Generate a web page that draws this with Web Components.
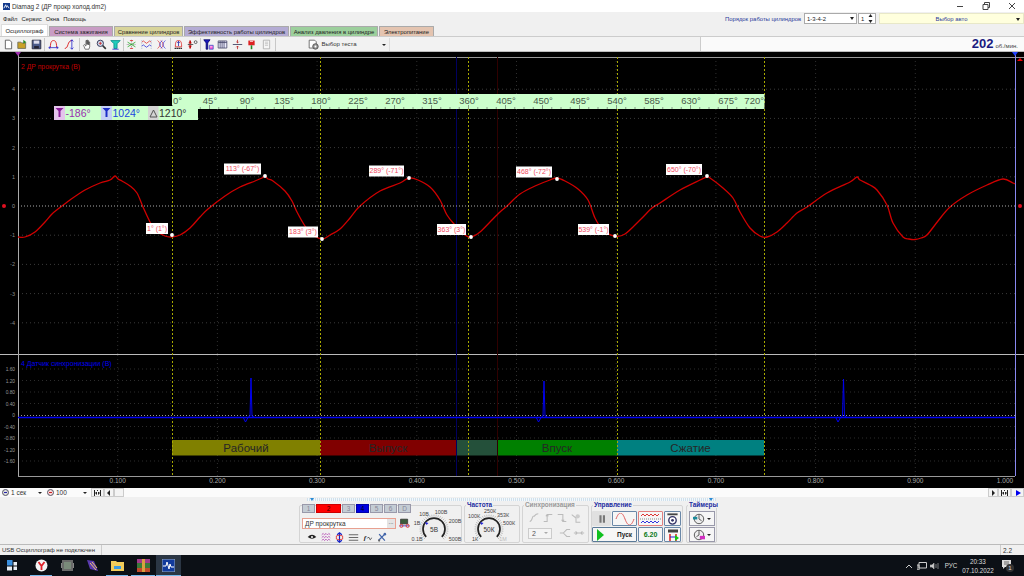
<!DOCTYPE html>
<html><head><meta charset="utf-8"><title>Diamag 2</title>
<style>html,body{margin:0;padding:0;width:1024px;height:576px;overflow:hidden;background:#f0f0f0;font-family:"Liberation Sans",Arial,sans-serif}</style>
</head><body>
<app-window>
  <title-bar></title-bar>
  <menu-bar></menu-bar>
  <tab-strip></tab-strip>
  <tool-bar></tool-bar>
  <scope-view></scope-view>
  <time-bar></time-bar>
  <control-panel></control-panel>
  <status-bar></status-bar>
  <task-bar></task-bar>
</app-window>
<script>
const I={
 doc:'<path d="M3 1.500h5.500l2.500 2.500v8.500H3z" fill="#fff" stroke="#444"/>',
 open:'<path d="M1 12V4h4l1 1h5v7z" fill="#c9a227" stroke="#665"/><path d="M8 1l4 3-4 2z" fill="#2a8a2a"/>',
 save:'<path d="M1.500 1.500h11v11h-11z" fill="#4a5a8a" stroke="#223"/><path d="M3.500 2h7v4h-7z" fill="#dde"/><path d="M4 9h6v3H4z" fill="#223"/>',
 arc:'<path d="M3 11C3 3 5 2 7 2s4 1 4 9" fill="none" stroke="#d22" stroke-width="1.200"/><path d="M1 11h12M1 11l2-1.500M1 11l2 1.500M13 11l-2-1.500M13 11l-2 1.500" stroke="#22c" fill="none"/>',
 arc2:'<path d="M1 12c5 0 3-10 9-10" fill="none" stroke="#d22" stroke-width="1.200"/><path d="M10 1v12M10 1l-2 2M10 1l2 2M10 13l-2-2M10 13l2-2" stroke="#22c" fill="none"/>',
 hand:'<path d="M4 13L2 8l1-1 2 2V2h1.200v5V1.500h1.200V7V2.300h1.200V7.500V4h1.200v6l-1 3z" fill="#fff" stroke="#333" stroke-width=".8"/>',
 zoom:'<circle cx="5.500" cy="5.500" r="4" fill="#cde" stroke="#335" stroke-width="1.200"/><path d="M8.500 8.500l4 4" stroke="#333" stroke-width="2"/><path d="M3.500 5.500h4M5.500 3.500v4" stroke="#c22"/>',
 teal:'<path d="M1 2h12L9 6v6H5V6z" fill="#2cb" stroke="#088"/><path d="M3 13h8" stroke="#22c"/>',
 cross:'<path d="M7 1v12M1 7h12" stroke="#777" stroke-dasharray="1 1"/><path d="M2 4l5 3 5-3M2 10l5-3 5 3" stroke="#2a2" fill="none"/><path d="M5 2h4M5 12h4" stroke="#d22"/>',
 w1:'<path d="M1 4q2-3 4 0t4 0 4 0" stroke="#d33" fill="none"/><path d="M1 9q2-3 4 0t4 0 4 0" stroke="#33d" fill="none"/><path d="M1 1.500v11M13 1.500v11" stroke="#9ac" stroke-dasharray="1 1"/>',
 w2:'<path d="M2 2c4 3 4 7 0 10M6 2c4 3 4 7 0 10" stroke="#d33" fill="none"/><path d="M12 2C8 5 8 9 12 12M8 2c-4 3-4 7 0 10" stroke="#33d" fill="none"/>',
 bell:'<path d="M3 10c0-8 2-8 4-8s4 0 4 8z" fill="none" stroke="#d22"/><path d="M7 3v6M5.500 5L7 3l1.500 2" stroke="#22a" fill="none"/><path d="M2 12h10" stroke="#333" stroke-width="1.500" stroke-dasharray="2 .5"/>',
 zero:'<path d="M1 7h7" stroke="#333"/><path d="M4 2v4M4 8v4" stroke="#b00" stroke-width="2"/><path d="M2 5h4M2 9h4" stroke="#b00"/><circle cx="11" cy="4" r="1.800" fill="none" stroke="#444"/>',
 fil:'<path d="M1 1h8L6 5v8H4V5z" fill="#1a1ac0" stroke="#006"/><path d="M8 8h5v5H8z" fill="#f4c" stroke="#36c"/><path d="M9 10h3" stroke="#fff"/>',
 table:'<path d="M1.500 2.500h11v9h-11z" fill="#eef" stroke="#446"/><path d="M1.500 4.500h11M4 2.500v9M6.500 2.500v9M9 2.500v9" stroke="#446"/>',
 div:'<path d="M1 7h12" stroke="#335"/><path d="M7 1v4M5.500 3.500L7 5l1.500-1.500M7 13V9M5.500 10.500L7 9l1.500 1.500" stroke="#b22" fill="none"/>',
 flag:'<path d="M3 2h8v6H3z" fill="#d22"/><path d="M7 8v5" stroke="#282" stroke-width="2"/><path d="M5 3h4" stroke="#fff"/>',
 page:'<path d="M3 1.500h8v11H3z" fill="#f6f6f6" stroke="#aaa"/><path d="M5 4h4M5 6h4M5 8h4" stroke="#bbb"/>',
 test:'<path d="M1.500 1.500h7l2 2v8h-9z" fill="#fff" stroke="#555"/><circle cx="9.500" cy="9.500" r="3.500" fill="#999" stroke="#444"/><circle cx="9.500" cy="9.500" r="1.200" fill="#fff"/>',
 eye:'<path d="M1 7q6-6 12 0q-6 5-12 0z" fill="#222"/><circle cx="7" cy="7" r="1.500" fill="#eee"/>',
 wav:'<path d="M1 4l2-2 2 2 2-2 2 2 2-2 2 2M1 8l2-2 2 2 2-2 2 2 2-2 2 2M1 12l2-2 2 2 2-2 2 2 2-2 2 2" fill="none" stroke="#a3a"/>',
 upd:'<path d="M7 1v12M4 3.500L7 1l3 2.500M4 10.500L7 13l3-2.500" fill="none" stroke="#12c" stroke-width="1.500"/><path d="M3 5q4-2 8 0v4q-4 2-8 0z" fill="none" stroke="#d22"/>',
 lines:'<path d="M1 3.500h12M1 7h12M1 10.500h12" stroke="#444"/>',
 fx:'<text x="1" y="11" font-size="10" font-style="italic" font-weight="700" font-family="Liberation Serif" fill="#222">f</text><path d="M6 9q2-4 3 0t3-1" stroke="#222" fill="none"/>',
 tool:'<path d="M2 12L11 3M3 3l8 9" stroke="#46a" stroke-width="1.800"/><circle cx="11" cy="3" r="1.800" fill="#46a"/><circle cx="3" cy="12" r="1.500" fill="#666"/>',
 scope:'<path d="M2 1.500h9v6H2z" fill="#3a5a3a" stroke="#333"/><path d="M1 10h12" stroke="#22c"/><circle cx="3" cy="10" r="2" fill="none" stroke="#d22"/><circle cx="11" cy="10" r="2" fill="none" stroke="#d22"/>',
 s1:'<path d="M2 11c3 0 3-6 4-6h1c1 0 1-3 5-3" fill="none" stroke="#bbb" stroke-width="1.200"/>',
 s2:'<path d="M2 11h4V3h6M6 3L4.500 5M6 3l1.500 2" fill="none" stroke="#bbb" stroke-width="1.200"/>',
 s3:'<path d="M2 3h6v8h4M8 11l-1.500-2M8 11l1.500-2" fill="none" stroke="#bbb" stroke-width="1.200"/>',
 s4:'<path d="M2 3l5 4v5h5" fill="none" stroke="#bbb" stroke-width="1.200"/><circle cx="9" cy="5" r="2.500" fill="#ccc"/>',
 s5:'<path d="M1 7h4l4-4h4M5 7l4 4h4" fill="none" stroke="#bbb" stroke-width="1.200"/>',
 s6:'<path d="M1 7h12M3 5l2 2-2 2M11 5L9 7l2 2" fill="none" stroke="#bbb" stroke-width="1.200"/>',
 pause:'<path d="M4 2.500h2.500v9H4zM8 2.500h2.500v9H8z" fill="#777"/>',
 gear:'<circle cx="7" cy="9" r="4" fill="#fff" stroke="#336" stroke-width="1.500"/><circle cx="7" cy="9" r="1.500" fill="#336"/><path d="M1.500 1.500h11v2h-11z" fill="#444"/>',
 auto:'<path d="M2 1.500h10v3H2z" fill="#444"/><path d="M4 6v7M10 6v7" stroke="#d22" stroke-width="1.500"/><path d="M4 9h6" stroke="#22c"/><path d="M9 7l4 3-4 3z" fill="#1c1"/>',
 t1:'<circle cx="7" cy="7" r="5.500" fill="#eee" stroke="#444"/><path d="M7 7V2.500M7 7l3 2" stroke="#444"/><path d="M0 4.500h5v3H0z" fill="#1a8a9a"/>',
 t2:'<circle cx="7" cy="7" r="5.500" fill="#eee" stroke="#444"/><path d="M7 7V2.500M7 7l-3 2" stroke="#444"/><path d="M8 8h6v4H8z" fill="#d030c0"/>'
};
const ic=(n,s=13)=>`<svg width="${s}" height="${s}" viewBox="0 0 14 14" style="display:block;flex:none">${I[n]}</svg>`;
class Base extends HTMLElement{
  constructor(){super();this.attachShadow({mode:'open'}).innerHTML=`<style>:host{display:block;box-sizing:border-box;font:6px "Liberation Sans",Arial,sans-serif;color:#222}*{box-sizing:border-box}${this.css||''}</style>${this.html||''}`;}
}
customElements.define('app-window',class extends Base{
  get css(){return ':host{display:flex;flex-direction:column;width:1024px;height:576px}'}
  get html(){return '<slot></slot>'}
});
customElements.define('title-bar',class extends Base{
  get css(){return `:host{height:12px;background:#fff;display:flex;align-items:center;padding-left:3px;gap:2px;font-size:6.400px;color:#333}
  .sp{flex:1}.w{width:24px;display:flex;justify-content:center}`}
  get html(){return `<svg width="7" height="7" viewBox="0 0 8 8"><path d="M0 0h8v8H0z" fill="#123a8c"/><path d="M1 6l2-4 1 3 1-2 2 3" stroke="#fff" fill="none"/></svg>
  <span>Diamag 2 (ДР прокр  холод.dm2)</span><span class="sp"></span>
  <span class="w"><svg width="8" height="8"><path d="M1 4.500h6" stroke="#444"/></svg></span>
  <span class="w"><svg width="8" height="8"><path d="M1 2.500h5v5H1zM2.500 2.500V.5h5v5h-1.500" fill="none" stroke="#444"/></svg></span>
  <span class="w"><svg width="8" height="8"><path d="M1 1l6 6M7 1L1 7" stroke="#444"/></svg></span>`}
});
customElements.define('menu-bar',class extends Base{
  get css(){return `:host{height:13px;background:#f0f0f0;display:flex;align-items:center;padding-left:3px;gap:4px;color:#222;font-size:5.900px}
  .sp{flex:1}.o{color:#2b3a9a;width:76px;white-space:nowrap}
  .c{height:11px;border:1px solid #aaa;background:#fff;display:flex;align-items:center;padding:0 2px;justify-content:space-between}
  .a{width:0;height:0;border:2px solid transparent;border-top:3px solid #222;border-bottom:0}
  .y{background:#ffffdd;border-color:#e8e8c8;color:#2b3a9a;width:145px;position:relative;justify-content:center}
  .y .a{position:absolute;right:3px;top:4px}`}
  get html(){return `<span>Файл</span><span>Сервис</span><span>Окна</span><span>Помощь</span><span class="sp"></span>
  <span class="o">Порядок работы цилиндров</span>
  <span class="c" style="width:53px;margin-left:-1px">1-3-4-2<i class="a"></i></span>
  <span class="c" style="width:18px;margin-left:-3px">1<svg width="5" height="9"><path d="M2.500 0l2 3h-4zM2.500 9l2-3h-4z" fill="#222"/></svg></span>
  <span class="c y" style="margin-left:-1px">Выбор авто<i class="a"></i></span>`}
});
customElements.define('tab-strip',class extends Base{
  get css(){return `:host{height:12px;background:#f0f0f0;display:flex;align-items:flex-end;padding-left:1px;gap:1px;border-bottom:1px solid #ccc;font-size:5.900px}
  span{height:10px;display:flex;align-items:center;justify-content:center;border:1px solid #aaa;border-bottom:0;border-radius:1px 1px 0 0;white-space:nowrap;overflow:hidden}
  .on{height:12px;background:#fff;border-color:#ddd}`}
  get html(){return [['Осциллограф',47,'#fff','on'],['Система зажигания',64,'#c89cc4'],['Сравнение цилиндров',69,'#d8d49a'],['Эффективность работы цилиндров',105,'#b4acd4'],['Анализ давления в цилиндре',88,'#9ccf9c'],['Электропитание',55,'#e4c4b0']]
   .map(t=>`<span class="${t[3]||''}" style="width:${t[1]}px;background:${t[2]}">${t[0]}</span>`).join('')}
});
customElements.define('tool-bar',class extends Base{
  get css(){return `:host{height:15px;background:#f2f2f2;display:flex;align-items:center;padding-left:1px;border-bottom:1px solid #bbb}
  .g{display:flex;align-items:center;height:13px;border-right:1px solid #c8c8c8;padding-right:1px}
  .b{display:flex;justify-content:center;align-items:center}
  .t{margin-left:28px;width:86px;display:flex;align-items:center;gap:3px;position:relative;height:13px;color:#333;padding-left:4px;border-right:1px solid #ddd}
  .t i{position:absolute;right:3px;top:6px;border:2px solid transparent;border-top:2.500px solid #222;border-bottom:0}
  .sp{flex:1}
  .r{width:324px;height:14px;display:flex;align-items:baseline;justify-content:flex-end;padding-right:6px;border-left:1px solid #ccc;background:#fafafa;color:#444}
  b{font-size:13px;color:#1a1a80;margin-right:2px;line-height:14px}`}
  get html(){const gr=(w,a)=>`<span class="g">${a.map(n=>`<span class="b" style="width:${w}px">${ic(n,11)}</span>`).join('')}</span>`;
   return gr(14,['doc','open','save'])+gr(16.500,['arc','arc2'])+gr(14,['hand','zoom','teal'])+gr(15,['cross','w1','w2'])+gr(14,['bell','zero'])+gr(14.500,['fil','table','div','flag','page'])+
   `<span class="t">${ic('test',11)}<span>Выбор теста</span><i></i></span><span class="sp"></span><span class="r"><b>202</b><span>об./мин.</span></span>`}
});
const curve=[[18,237],[25,237],[35,232],[45,222],[52,214],[58,209],[70,200],[85,190],[100,183],[110,180],[115,176],[118,179],[122,181],[130,186],[137,193],[143,207],[150,222],[155,230],[165,236],[172,237],[180,235],[190,228],[200,217],[208,209],[225,196],[240,187],[255,181],[262,178],[265,176],[268,179],[273,181],[285,191],[292,201],[297,212],[305,226],[312,234],[322,239],[330,235],[340,229],[350,218],[360,206],[380,191],[400,183],[409,178],[418,180],[430,187],[440,200],[447,215],[455,225],[465,235],[471,237],[480,232],[490,222],[500,212],[507,206],[520,194],[535,186],[550,180],[557,178],[565,181],[578,189],[588,200],[595,218],[603,230],[614,236],[625,234],[640,220],[652,208],[660,203],[680,190],[700,180],[707,177],[710,178],[723,188],[733,198],[740,212],[750,228],[760,236],[767,237],[777,232],[787,223],[797,213],[807,207],[827,193],[850,182],[857,177],[860,180],[870,185],[877,190],[887,205],[893,223],[903,237],[909,239],[915,239.500],[921,238],[927,235],[938,221],[950,207],[967,195],[987,185],[1003,179],[1013,183],[1015,184]];
const smooth=p=>{let d=`M${p[0][0]} ${p[0][1]}`;for(let i=0;i<p.length-1;i++){const a=p[i-1]||p[i],b=p[i],c=p[i+1],e=p[i+2]||c;d+=`C${(b[0]+(c[0]-a[0])/6).toFixed(1)} ${(b[1]+(c[1]-a[1])/6).toFixed(1)} ${(c[0]-(e[0]-b[0])/6).toFixed(1)} ${(c[1]-(e[1]-b[1])/6).toFixed(1)} ${c[0]} ${c[1]}`;}return d};
const chip=(x0,x1,yc,t)=>`<rect x="${x0}" y="${yc-5.500}" width="${x1-x0}" height="11" fill="#fff"/><text x="${(x0+x1)/2}" y="${yc+2.400}" text-anchor="middle" font-size="7" fill="#f04a60">${t}</text>`;
customElements.define('scope-view',class extends Base{
  get css(){return ':host{height:436px;background:#000}svg{display:block;font-family:"Liberation Sans",Arial,sans-serif}'}
  get html(){
   let s='';
   for(let v=-4;v<=4;v++){if(!v)continue;const y=206-v*29.200;s+=`<path d="M18 ${y}H1015" stroke="#3a3a3a" stroke-dasharray="1 3"/><text x="15" y="${y+2}" text-anchor="end" font-size="5.500" fill="#888">${v}</text>`;}
   s+=`<text x="15" y="208" text-anchor="end" font-size="5.500" fill="#999">0</text>`;
   ['1.60','1.20','0.80','0.40','0','-0.40','-0.80','-1.20','-1.60'].forEach((t,i)=>{const y=369+i*11.500;s+=`<text x="15" y="${y+2}" text-anchor="end" font-size="4.800" fill="#999">${t}</text>`;if(t!='0')s+=`<path d="M18 ${y}H1015" stroke="#2c2c2c" stroke-dasharray="1 3"/>`;});
   for(let i=1;i<=9;i++){const x=18+i*99.700;s+=`<path d="M${x} 57V354M${x} 355V476" stroke="#2e2e2e" stroke-dasharray="1 3"/><text x="${x}" y="483" text-anchor="middle" font-size="6.500" fill="#aaa">0.${i}00</text>`;}
   s+=`<text x="1005" y="483" text-anchor="middle" font-size="6.500" fill="#aaa">1.000</text>`;
   [[172,320,'#808000','Рабочий'],[320,456,'#800000','Выпуск'],[456,497,'#24503a',''],[497,617,'#008000','Впуск'],[617,764,'#008080','Сжатие']].forEach(p=>{
     s+=`<rect x="${p[0]}" y="440" width="${p[1]-p[0]}" height="15.500" fill="${p[2]}"/>`;
     if(p[3]){const cx=p[3]=='Выпуск'?388:(p[0]+p[1])/2;s+=`<text x="${cx}" y="451.500" text-anchor="middle" font-size="11.500" fill="#262626">${p[3]}</text>`;}
   });
   s+=`<path d="M18 57.500H1024M18 476.500H1015" stroke="#999"/><path d="M0 354.500H1024" stroke="#bbb"/><path d="M18.500 52V476" stroke="#aaa"/><path d="M1015.500 52V476" stroke="#8888f0"/>`;
   [172,320,468,617,764].forEach(x=>s+=`<path d="M${x+.5} 57V476" stroke="#a8a800" stroke-dasharray="2 2"/>`);
   s+=`<path d="M456.500 57V476" stroke="#000060"/><path d="M497.500 57V476" stroke="#300000"/>`;
   s+=`<path d="M15 52h6l-3 4z" fill="#a030b0"/><path d="M1012 52h6l-3 4z" fill="#2040ff"/><path d="M1017 61l3-3 3 3z" fill="#e00"/><circle cx="4" cy="206" r="2" fill="#e01020"/><circle cx="1020" cy="206" r="2" fill="#e01020"/>`;
   s+=`<path d="${smooth(curve)}" fill="none" stroke="#d00000" stroke-width="1.300"/>`;
   s+=`<path d="M18 206H1015" stroke="#aaa" stroke-dasharray="1 2"/><path d="M18 415.500H1015" stroke="#999" stroke-dasharray="1 2"/>`;
   const sp=(x,top)=>`M${x-8} 417L${x-5.500} 422L${x-3} 417.500L${x-1} 416L${x} ${top}L${x+1} 416L${x+3} 417`;
   s+=`<path d="M18 417.500H1015" stroke="#0000f0" stroke-width="1.700"/><path d="${sp(251,378)}${sp(544,381)}${sp(843.500,379)}" fill="none" stroke="#0000f0" stroke-width="1"/>`;
   s+=`<text x="21" y="68.500" font-size="6.800" fill="#c00000">2 ДР прокрутка (В)</text><text x="21" y="365.500" font-size="7" fill="#0000f0">4 Датчик синхронизации (В)</text>`;
   s+=`<rect x="172" y="94" width="592.500" height="15" fill="#ccffcc"/>`;
   for(let i=0;i<=64;i++){const x=172.500+i*9.250;s+=`<path d="M${x} ${i%4?107:105}V109" stroke="#555" stroke-width=".6"/>`;}
   for(let i=0;i<=16;i++){const x=172+i*37,a=i==0?'start':i==16?'end':'middle';s+=`<text x="${i==0?173:i==16?764:x+1}" y="104" text-anchor="${a}" font-size="9.500" fill="#4a5a4a">${i*45}°</text>`;}
   s+=`<rect x="54" y="106" width="144" height="14" fill="#ccffcc"/><rect x="54" y="106" width="11" height="14" fill="#e4c4ec"/><rect x="101" y="106" width="11" height="14" fill="#c4d0f4"/><rect x="148" y="106" width="10.500" height="14" fill="#d4d4d4"/>
   <path d="M55.500 108h8l-3 3v6h-2v-6z" fill="#8a1c9a"/><path d="M102.500 108h8l-3 3v6h-2v-6z" fill="#1c2ec8"/><path d="M150 117l3.500-7 3.500 7z" fill="none" stroke="#555"/>
   <text x="65.500" y="116.500" font-size="10.500" fill="#9a30b0">-186°</text><text x="112.500" y="116.500" font-size="10.500" fill="#2244e0">1024°</text><text x="159" y="116.500" font-size="10.500" fill="#333">1210°</text>`;
   s+=chip(146,168,228.500,'1° (1°)')+chip(224,261,169,'113° (-67°)')+chip(288,318,232,'183° (3°)')+chip(369,404,171,'289° (-71°)')+chip(437,466,229.500,'363° (3°)')+chip(516,552,172,'468° (-72°)')+chip(578,609,229.500,'539° (-1°)')+chip(666,702,169.500,'650° (-70°)');
   [[172,235],[265,176],[322,239],[409,178],[471,237],[557,179],[615,236],[707,176]].forEach(p=>s+=`<circle cx="${p[0]}" cy="${p[1]}" r="1.900" fill="#fff"/>`);
   return `<svg width="1024" height="436" viewBox="0 52 1024 436">${s}</svg>`}
});
customElements.define('time-bar',class extends Base{
  get css(){return `:host{height:9px;background:#fbfbfb;display:flex;align-items:center;color:#333;font-size:6.500px}
  .c{display:flex;align-items:center;justify-content:space-between;padding:0 4px 0 1px;height:9px}
  .a{border:2px solid transparent;border-top:2.500px solid #222;border-bottom:0}
  .o{width:7px;height:7px;border-radius:50%;border:1px solid #556;margin:0 1px;display:flex;align-items:center;justify-content:center;background:#ddd}
  .o i{width:3px;height:1px;background:#22a}
  .p{display:flex;width:10px;height:9px;border:1px solid #ccc;background:#f4f4f4;justify-content:center;align-items:center}
  .sp{flex:1}`}
  get html(){const tri=(d,c='#222',bar)=>`<span class="p" ${bar?'style="width:13px"':''}><svg width="8" height="6"><path d="${d}" fill="${c}"/></svg></span>`;
   return `<span class="o" style="margin-left:2px"><i></i></span><span class="c" style="width:36px">1 сек<i class="a"></i></span><span class="o" style="background:#f8d8d8"><i style="background:#c22"></i></span><span class="c" style="width:36px">100<i class="a"></i></span>
   ${tri('M0 0h1v6H0zM1 3l3-3v6zM7 0H6v6h1zM6 3L3 0v6z','#222',1)}${tri('M5 0v6L2 3z')}<span class="p"></span><span class="sp"></span>
   ${tri('M3 0v6l3-3z')}${tri('M0 0h1v6H0zM1 3l3-3v6zM7 0H6v6h1zM6 3L3 0v6z','#222',1)}${tri('M2 0v6l5-3z','#00e',1)}`}
});
customElements.define('tick-knob',class extends Base{
  connectedCallback(){
   const lab=JSON.parse(this.getAttribute('labels')),c=this.getAttribute('center');
   let t='';for(let a=-135;a<=135;a+=9){const r=a*Math.PI/180;t+=`<path d="M${30+12.500*Math.sin(r)} ${21-12.500*Math.cos(r)}L${30+14.500*Math.sin(r)} ${21-14.500*Math.cos(r)}" stroke="#aaa" stroke-width=".7"/>`;}
   this.shadowRoot.innerHTML=`<style>:host{display:block;width:60px;height:38px;flex:none}svg{display:block;overflow:visible;font-family:"Liberation Sans",Arial,sans-serif}</style>
   <svg width="60" height="38" viewBox="0 0 60 38">${t}<circle cx="30" cy="21" r="11" fill="#eee"/><path d="M22.200 28.800a11 11 0 1 1 15.600 0" fill="none" stroke="#222" stroke-width="1.700"/><path d="M21 14l3.500 1-2 2z" fill="#22d"/><text x="30" y="23.500" font-size="6.500" text-anchor="middle" fill="#333">${c}</text>
   ${lab.map(l=>`<text x="${l[1]}" y="${l[2]}" font-size="5.400" text-anchor="middle" fill="${l[3]||'#444'}">${l[0]}</text>`).join('')}</svg>`;
  }
});
customElements.define('ctl-group',class extends Base{
  get css(){return `:host{display:block;position:relative;border:1px solid #d4d4d4;border-radius:2px;height:38px;margin-top:4px;background:#f0f0f0;flex:none}
  .l{position:absolute;left:1px;top:-5px;background:#f0f0f0;font-weight:700;font-size:6.400px;padding:0 1px;white-space:nowrap;color:var(--c,#1a2aa0)}
  .l:empty{display:none}
  .i{display:flex;height:100%}`}
  get html(){return '<span class="l"></span><div class="i"><slot></slot></div>'}
  connectedCallback(){this.shadowRoot.querySelector('.l').textContent=this.getAttribute('label')||''}
});
customElements.define('control-panel',class extends Base{
  get css(){return `:host{height:48px;background:#f0f0f0;border-bottom:1px solid #bbb;padding:0 0 0 299px;display:flex;flex-direction:column}
  .sl{width:409px;height:3px;margin:1px 0 0 8px;background:repeating-linear-gradient(90deg,#cfe0ec 0 1px,#f4f8fb 1px 2px);position:relative}
  .sl i{position:absolute;left:3px;top:0;border:2px solid transparent;border-top:3px solid #2a8ad4;border-bottom:0}
  .sl u{position:absolute;right:3px;top:0;border:2px solid transparent;border-top:3px solid #2a8ad4;border-bottom:0}
  .row{display:flex;gap:2px}
  .col{display:flex;flex-direction:column;padding:0 0 0 2px;width:120px;flex:none}
  .ch{display:flex;gap:1px;height:9px;margin-top:-2px;position:relative}
  .ch span{width:13px;height:9px;display:flex;align-items:center;justify-content:center;background:#c4ccd4;border:1px solid #99a;color:#889;font-size:6.500px}
  .ch .r{width:25px;background:#f00;color:#400;border-color:#c00}.ch .bl{background:#0000e0;color:#001;border-color:#00a}
  .inp{margin-top:5px;display:flex;align-items:center;gap:3px;height:11px}
  .inp .f{width:94px;height:11px;border:1px solid #e8a090;background:#fff;display:flex;align-items:center;justify-content:space-between;padding-left:2px;font-size:6.500px;color:#333;flex:none}
  .inp .f i{width:8px;height:9px;background:#e4e4e4;font:6px "Liberation Sans";text-align:center;line-height:6px}
  .ic{display:flex;margin-top:2px;padding-left:3px;gap:1px;height:12px}
  .ic span{width:13px;height:12px;display:flex;align-items:center;justify-content:center}
  .sync{display:flex;flex-direction:column;padding:5px 3px 0;gap:1px;width:100%}
  .sr{display:flex;gap:2px;height:14px;align-items:center;padding-left:2px}
  .cb{width:26px;height:11px;border:1px solid #ccc;background:#f4f4f4;color:#555;display:flex;align-items:center;justify-content:space-between;padding:0 3px;font-size:7px}
  .cb i{border:2px solid transparent;border-top:2.500px solid #aaa;border-bottom:0}
  .grid{display:grid;grid-template-columns:19px 25px 25px 17px;grid-template-rows:15px 15px;gap:1px;padding:5px 0 0;width:100%}
  .k{display:flex;align-items:center;justify-content:center;border:1px solid #6a88a8;background:#f6f6f6;border-radius:1px;overflow:hidden}
  .timer{display:flex;flex-direction:column;gap:1px;padding:5px 2px 0}
  .tb{height:15px;width:26px;border:1px solid #99a;display:flex;align-items:center;justify-content:center;gap:2px;background:#f6f6f6}
  .tb i{border:2px solid transparent;border-top:2.500px solid #222;border-bottom:0}`}
  get html(){return `<div class="sl"><i></i><u></u></div><div class="row">
   <ctl-group style="width:163px"><div class="col">
     <div class="ch"><span>1</span><span class="r">2</span><span>3</span><span class="bl">4</span><span>5</span><span>6</span><span>D</span></div>
     <div class="inp"><span class="f">ДР прокрутка<i>...</i></span>${ic('scope',11)}</div>
     <div class="ic"><span>${ic('eye',10)}</span><span>${ic('wav',10)}</span><span>${ic('upd',11)}</span><span>${ic('lines',11)}</span><span>${ic('fx',10)}</span><span>${ic('tool',10)}</span></div>
   </div><tick-knob center="5В" labels='[["10В",20,8],["100В",37,5.500],["200В",51,15],["500В",51,33],["0.1В",13,33],["1В",13,17]]' style="margin:2px 0 0 -16px"></tick-knob></ctl-group>
   <ctl-group label="Частота" style="width:56px"><tick-knob center="50К" labels='[["100К",15,10],["250К",31,4.500],["353К",44,9],["500К",50,17],["1К",16,33],["1М",44,33,"#bbb"]]' style="margin:2px 0 0 -6px"></tick-knob></ctl-group>
   <ctl-group label="Синхронизация" style="width:67px;--c:#999"><div class="sync"><div class="sr">${ic('s1',12)}${ic('s2',12)}${ic('s3',12)}${ic('s4',12)}</div><div class="sr"><span class="cb">2<i></i></span><span style="width:4px"></span>${ic('s5',12)}${ic('s6',12)}</div></div></ctl-group>
   <ctl-group label="Управление" style="width:92px"><div class="grid">
     <span class="k" style="background:#e0e0e0;border-color:#e0e0e0">${ic('pause',12)}</span>
     <span class="k"><svg width="20" height="12"><path d="M1 6c3-8 6-8 9 0s6 8 9 0" fill="none" stroke="#e05a5a"/></svg></span>
     <span class="k" style="border-color:#e08080"><svg width="21" height="12"><path d="M1 3l2-2 2 2 2-2 2 2 2-2 2 2 2-2 2 2 2-2" fill="none" stroke="#d33"/><path d="M0 6h21" stroke="#888" stroke-dasharray="1 1"/><path d="M1 10l2-2 2 2 2-2 2 2 2-2 2 2 2-2 2 2 2-2" fill="none" stroke="#33d"/></svg></span>
     <span class="k">${ic('gear',13)}</span>
     <span class="k" style="grid-column:1/3;font-weight:700;font-size:6.500px;justify-content:flex-start;padding-left:4px;color:#222;border-color:#5a7a98"><svg width="7" height="12" style="flex:none"><path d="M0 0l7 6-7 6z" fill="#10c020"/></svg><span style="margin-left:13px">Пуск</span></span>
     <span class="k" style="font-weight:700;color:#0a7a1a;font-size:7px">6.20</span>
     <span class="k">${ic('auto',14)}</span>
   </div></ctl-group>
   <ctl-group label="Таймеры" style="width:31px;margin-left:1px"><div class="timer"><span class="tb">${ic('t1',12)}<i></i></span><span class="tb">${ic('t2',12)}<i></i></span></div></ctl-group>
  </div>`}
});
customElements.define('status-bar',class extends Base{
  get css(){return `:host{height:10px;background:#f0f0f0;display:flex;align-items:center;color:#333}
  span{height:10px;display:flex;align-items:center;padding-left:2px;white-space:nowrap}.a{width:102px;border-right:1px solid #ccc}.m{flex:1}.z{width:24px;border-left:1px solid #ccc;font-size:6.500px;padding-left:2px}`}
  get html(){return '<span class="a">USB Осциллограф не подключен</span><span class="m"></span><span class="z">2.2</span>'}
});
customElements.define('task-bar',class extends Base{
  get css(){return `:host{height:21px;background:#0c1016;display:flex;align-items:center;color:#ccc}
  .s{width:25px;display:flex;justify-content:center;height:21px;align-items:center;flex:none;border-bottom:1px solid transparent}
  .u{border-bottom:1px solid #76b9ed}.act{background:#2b3644}
  .sp{flex:1}.t{display:flex;flex-direction:column;align-items:center;width:32px;gap:2px;font-size:6.300px;color:#ddd;line-height:7px}
  .tr{display:flex;width:13px;justify-content:center}.rus{width:18px;text-align:center;color:#ddd;font-size:6.300px;margin:0 2px 0 1px}`}
  get html(){return `<span class="s"><svg width="11" height="11"><path d="M0 0h5.500v5.500H0z" fill="#3a90e0"/><path d="M6.500 2H10v3.500H6.500zM0 6.500h5v4H0zM6.500 6.500H10V10H6.500z" fill="#e8eef4"/></svg></span>
  <span class="s u" style="margin-left:5px;width:22px"><svg width="13" height="13"><circle cx="6.500" cy="6.500" r="6" fill="#f4f4f4"/><path d="M3.500 3l3 4 3-4M6.500 7v4" stroke="#e0222a" stroke-width="1.800" fill="none"/></svg></span>
  <span class="s" style="margin-left:2px;width:26px"><svg width="13" height="11"><path d="M1 0h11v11H1z" fill="#6a6a6a"/><path d="M3 2h7v7H3z" fill="#7a8a7a"/><path d="M0 3h1v5H0zM12 3h1v5h-1z" fill="#888"/></svg></span>
  <span class="s" style="width:25px"><svg width="13" height="13"><path d="M1 1l7 1 4 10-8-2z" fill="#5a3ab0"/><path d="M4 4l6 7M6 3l5 6" stroke="#f0c860"/></svg></span>
  <span class="s u" style="width:22px;margin-left:1px"><svg width="13" height="11"><path d="M0 1h5l1 1h7v9H0z" fill="#f2cc5a"/><path d="M3 6h7v3H3z" fill="#3a9ae0"/></svg></span>
  <span class="s u" style="width:24px;margin-left:3px"><svg width="13" height="13"><path d="M0 0h13v4H0z" fill="#a03a8a"/><path d="M0 4h13v5H0z" fill="#3a7a3a"/><path d="M0 9h13v4H0z" fill="#c04a2a"/><path d="M5 0h3v13H5z" fill="#d8a040"/></svg></span>
  <span class="s u act" style="width:25px;margin-left:1px"><svg width="13" height="13"><path d="M0 0h13v13H0z" fill="#123a9c" stroke="#9ab"/><path d="M1 7h3l1-4 2 7 1-5 1 3h3" stroke="#fff" fill="none"/></svg></span>
  <span class="sp"></span>
  <span class="tr"><svg width="8" height="6"><path d="M1 5l3-3 3 3" stroke="#ccc" fill="none"/></svg></span>
  <span class="tr"><svg width="10" height="8"><path d="M2 .5h7.500v5.500H2zM0 3h2v5H0z" fill="none" stroke="#ccc"/></svg></span>
  <span class="tr"><svg width="10" height="8"><path d="M0 3h2l2-2v6L2 5H0zM6 2v4M8 1v6" stroke="#aaa" fill="#ccc" stroke-width=".7"/></svg></span>
  <span class="rus">РУС</span>
  <span class="t"><span>20:33</span><span>07.10.2022</span></span>
  <span class="tr" style="width:28px;margin-right:2px"><svg width="14" height="14"><path d="M1 1h9v7H4L2 10V8H1z" fill="#ddd"/><path d="M3 3h5M3 5h5" stroke="#333" stroke-width=".7"/><circle cx="9" cy="9" r="4" fill="#333"/><text x="9" y="11" font-size="6" text-anchor="middle" fill="#ddd" font-family="Liberation Sans">1</text></svg></span>`}
});
</script>
</body></html>
